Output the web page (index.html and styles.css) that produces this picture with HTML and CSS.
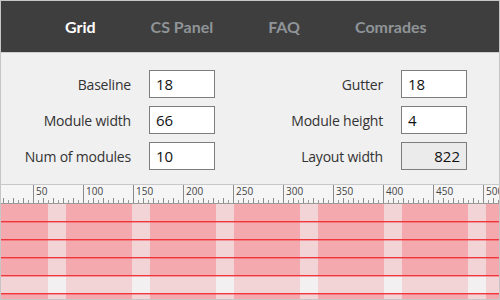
FILE: index.html
```html
<!DOCTYPE html>
<html lang="en">
<head>
    <meta charset="UTF-8">
    <title>Grid</title>
    <link rel="stylesheet" href="styles.css">
</head>
<body>
    <div class="frame">
        <nav class="menu">
            <a class="active" href="#">Grid</a>
            <a href="#">CS Panel</a>
            <a href="#">FAQ</a>
            <a href="#">Comrades</a>
        </nav>

        <form class="settings">
            <label for="baseline">Baseline</label>
            <input type="text" id="baseline" value="18">
            <label for="gutter">Gutter</label>
            <input type="text" id="gutter" value="18">

            <label for="mwidth">Module width</label>
            <input type="text" id="mwidth" value="66">
            <label for="mheight">Module height</label>
            <input type="text" id="mheight" value="4">

            <label for="count">Num of modules</label>
            <input type="text" id="count" value="10">
            <label for="lwidth">Layout width</label>
            <input type="text" id="lwidth" class="result" value="822" readonly>
        </form>

        <div class="ruler">
            <span>50</span>
            <span>100</span>
            <span>150</span>
            <span>200</span>
            <span>250</span>
            <span>300</span>
            <span>350</span>
            <span>400</span>
            <span>450</span>
            <span>500</span>
        </div>

        <div class="grid">
            <div class="row module">
                <div class="line"></div>
                <div class="line"></div>
                <div class="line"></div>
                <div class="line"></div>
            </div>
            <div class="row gap">
                <div class="line"></div>
            </div>
            <div class="row module">
                <div class="line"></div>
            </div>
        </div>
    </div>
</body>
</html>
```

FILE: styles.css
```css
html, body {
    margin: 0;
    padding: 0;
}

.frame {
    width: 500px;
    height: 300px;
    box-sizing: border-box;
    border: 1px solid #c6c6c6;
    overflow: hidden;
    background: #f0f0f0;
    font-family: "Open Sans", "DejaVu Sans", sans-serif;
}

.menu {
    height: 51px;
    background: #3e3e3e;
    border-bottom: 1px solid #cfcfcf;
    display: flex;
    align-items: center;
    gap: 55px;
    padding-left: 64px;
}

.menu a {
    color: #8f9498;
    font-family: Lato, "Open Sans", sans-serif;
    font-size: 16px;
    font-weight: bold;
    text-decoration: none;
}

.menu a.active {
    color: #fff;
}

.settings {
    display: grid;
    grid-template-columns: 130px 66px 150px 66px;
    grid-auto-rows: 28px;
    column-gap: 18px;
    row-gap: 8px;
    align-items: center;
    margin: 0;
    padding: 17px 0 14px 0;
    border-bottom: 1px solid #c8c8c8;
}

.settings label {
    text-align: right;
    font-size: 14px;
    letter-spacing: -0.2px;
    color: #333;
}

.settings input {
    width: 66px;
    height: 28px;
    box-sizing: border-box;
    border: 1px solid #7d7d7d;
    background: #fff;
    padding: 0 6px;
    font-family: inherit;
    font-size: 15px;
    color: #111;
}

.settings input.result {
    background: #ebebeb;
    text-align: right;
}

.ruler {
    height: 18px;
    display: flex;
    padding-left: 32px;
    background-color: #f5f5f5;
    background-image:
        repeating-linear-gradient(to right, #8a8a8a 0 1px, transparent 1px 10px),
        repeating-linear-gradient(to right, #9a9a9a 0 1px, transparent 1px 5px);
    background-size: 100% 5px, 100% 3px;
    background-position: 2px bottom, 2px bottom;
    background-repeat: repeat-x;
    border-bottom: 1px solid #9a9a9a;
}

.ruler span {
    flex: 0 0 50px;
    box-sizing: border-box;
    border-left: 1px solid #8a8a8a;
    padding: 1px 0 0 2px;
    font-size: 10px;
    line-height: 11px;
    color: #444;
}

.grid {
    display: flex;
    flex-direction: column;
}

.row {
    flex: none;
}

.row.module {
    height: 72px;
    background: repeating-linear-gradient(to right, #f3a9ad 0 47px, #f3d4d6 47px 65px, #f3a9ad 65px 84px);
}

.row.gap {
    height: 18px;
    background: repeating-linear-gradient(to right, #f3d4d6 0 47px, #f2f0f0 47px 65px, #f3d4d6 65px 84px);
}

.line {
    height: 18px;
    box-sizing: border-box;
    border-bottom: 1px solid #f0353b;
}

/* soften the baseline over two pixel rows */
.line + .line,
.row + .row .line:first-child {
    box-shadow: inset 0 1px 0 rgba(240, 53, 59, 0.4);
}
```
